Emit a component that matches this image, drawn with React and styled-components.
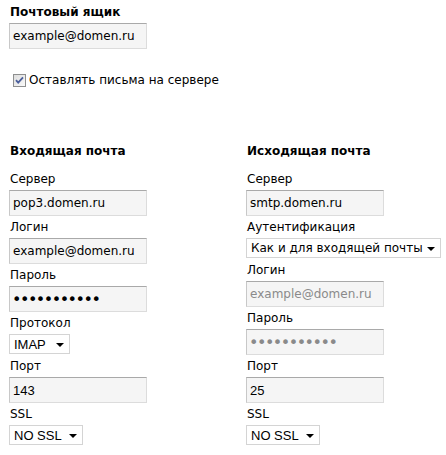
import styled, { createGlobalStyle } from "styled-components";

const GlobalStyle = createGlobalStyle`
  body {
    margin: 0;
    background: #fff;
    color: #000;
    font-family: "DejaVu Sans", Verdana, sans-serif;
    font-size: 12px;
  }
`;

const Page = styled.div`
  padding: 4px 0 0 9px;
  width: 437px;
`;

const Title = styled.div`
  font-weight: bold;
  line-height: 16px;
  margin: ${(props) => props.$margin || "0"};
  padding-left: 1px;
`;

const Label = styled.label`
  display: block;
  line-height: 16px;
  margin-bottom: 3px;
  padding-left: 1px;
`;

const Field = styled.div`
  margin-bottom: ${(props) => (props.$select ? "4px" : "3px")};
`;

const TextInput = styled.input`
  box-sizing: border-box;
  display: block;
  width: 138px;
  height: 26px;
  margin: 0;
  padding: 0 3px;
  background: #f5f5f5;
  border: 1px solid #dcdcdc;
  border-top-color: #a9a9a9;
  border-left-color: #c8c8c8;
  font-family: ${(props) =>
    props.$arial ? '"Liberation Sans", Arial, sans-serif' : '"DejaVu Sans", Verdana, sans-serif'};
  font-size: ${(props) => (props.$arial ? "13px" : "12px")};
  color: ${(props) => (props.disabled ? "#8a8a8a" : "#000")};
  outline: none;

  &[type="password"] {
    font-size: 16px;
    letter-spacing: -1.5px;
    padding-left: 2px;
  }
`;

const SelectBox = styled.div`
  box-sizing: border-box;
  display: flex;
  align-items: center;
  justify-content: space-between;
  width: ${(props) => props.$width}px;
  height: 20px;
  margin-top: 1px;
  padding: 0 5px 0 4px;
  background: #fff;
  border: 1px solid #d4d4d4;
  font-family: ${(props) =>
    props.$verdana ? '"DejaVu Sans", Verdana, sans-serif' : '"Liberation Sans", Arial, sans-serif'};
  font-size: ${(props) => (props.$verdana ? "12px" : "13px")};
  white-space: nowrap;
`;

const Arrow = styled.span`
  width: 0;
  height: 0;
  border-left: 4px solid transparent;
  border-right: 4px solid transparent;
  border-top: 4px solid #000;
  margin-top: 1px;
`;

const CheckRow = styled.label`
  display: flex;
  align-items: center;
  gap: 3px;
  margin: 23px 0 0 4px;
  line-height: 16px;
`;

const Columns = styled.div`
  display: grid;
  grid-template-columns: 237px 1fr;
  margin-top: 55px;
`;

const Column = styled.div`
  display: flex;
  flex-direction: column;
`;

function CheckBox() {
  return (
    <svg width="13" height="13" viewBox="0 0 13 13">
      <defs>
        <linearGradient id="cb" x1="0" y1="0" x2="1" y2="1">
          <stop offset="0" stopColor="#dcdcdc" />
          <stop offset="1" stopColor="#fbfbfb" />
        </linearGradient>
      </defs>
      <rect x="0.5" y="0.5" width="12" height="12" fill="url(#cb)" stroke="#8e8f8f" />
      <path d="M3 6.2 L5.2 8.6 L10 3.4" fill="none" stroke="#4b5f9c" strokeWidth="1.8" />
    </svg>
  );
}

function Select({ value, width, verdana }) {
  return (
    <SelectBox $width={width} $verdana={verdana}>
      <span>{value}</span>
      <Arrow />
    </SelectBox>
  );
}

function InputField({ label, ...rest }) {
  return (
    <Field>
      <Label>{label}</Label>
      <TextInput readOnly {...rest} />
    </Field>
  );
}

function SelectField({ label, ...rest }) {
  return (
    <Field $select>
      <Label>{label}</Label>
      <Select {...rest} />
    </Field>
  );
}

export default function App() {
  return (
    <Page>
      <GlobalStyle />
      <Title $margin="0 0 3px">Почтовый ящик</Title>
      <TextInput readOnly value="example@domen.ru" />
      <CheckRow>
        <CheckBox />
        <span>Оставлять письма на сервере</span>
      </CheckRow>
      <Columns>
        <Column>
          <Title $margin="0 0 12px">Входящая почта</Title>
          <InputField label="Сервер" value="pop3.domen.ru" />
          <InputField label="Логин" value="example@domen.ru" />
          <InputField label="Пароль" type="password" value="12345678901" />
          <SelectField label="Протокол" value="IMAP" width={61} />
          <InputField label="Порт" value="143" $arial />
          <SelectField label="SSL" value="NO SSL" width={74} />
        </Column>
        <Column>
          <Title $margin="0 0 12px">Исходящая почта</Title>
          <InputField label="Сервер" value="smtp.domen.ru" />
          <SelectField label="Аутентификация" value="Как и для входящей почты" width={195} verdana />
          <InputField label="Логин" value="example@domen.ru" disabled />
          <InputField label="Пароль" type="password" value="12345678901" disabled />
          <InputField label="Порт" value="25" $arial />
          <SelectField label="SSL" value="NO SSL" width={74} />
        </Column>
      </Columns>
    </Page>
  );
}
